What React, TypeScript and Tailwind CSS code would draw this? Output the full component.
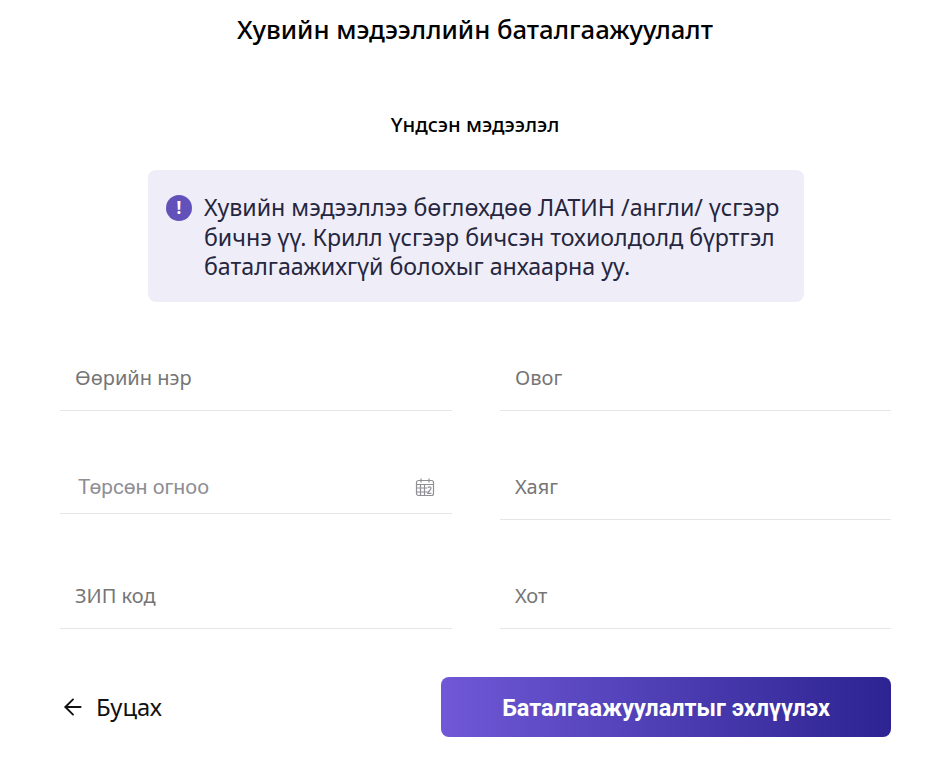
import { ArrowLeft } from 'lucide-react'

function Field({ label }: { label: string }) {
  return (
    <div className="h-[60px] flex items-center px-[15px] pb-[6px] border-b border-[#e6e6e6] font-['Noto_Sans',sans-serif] text-[20px] text-[#757575]">
      {label}
    </div>
  )
}

function CalendarIcon() {
  return (
    <svg width="20" height="20" viewBox="0 0 20 20" fill="none" stroke="#8f8f94" strokeWidth="1.2">
      <rect x="1.5" y="3.5" width="17" height="15" rx="2" />
      <path d="M1.5 7.5h17M6 1.5v4M14 1.5v4M1.5 11h11M1.5 15h11M5.5 8v10M9.5 8v10M13 10.5c1-1.2 3-.8 3 .8 0 1.5-3 3-3.2 5h3.6" />
    </svg>
  )
}

export default function App() {
  return (
    <div className="w-[946px] h-[760px] overflow-hidden bg-white pl-[60px] pr-[55px] font-['Noto_Sans',sans-serif]">
      <h1 className="h-[60px] flex items-center justify-center text-[25.7px] font-medium text-black pr-[1px]">
        Хувийн мэдээллийн баталгаажуулалт
      </h1>
      <h2 className="mt-[51px] h-[26px] flex items-center justify-center text-[20.3px] font-medium text-black pr-[1px]">
        Үндсэн мэдээлэл
      </h2>
      <div className="mt-[33px] ml-[88px] w-[656px] h-[132px] rounded-lg bg-[#efeef8] flex pl-[18px] pr-[16px] pt-[23px]">
        <div className="w-[26px] h-[26px] mt-[2px] shrink-0 rounded-full bg-[#6251b8] flex items-center justify-center text-white text-[17px] font-bold">
          !
        </div>
        <p className="ml-[12px] text-[23.2px] leading-[29.5px] text-[#26263f]">
          Хувийн мэдээллээ бөглөхдөө ЛАТИН /англи/ үсгээр бичнэ үү. Крилл үсгээр бичсэн тохиолдолд бүртгэл баталгаажихгүй болохыг анхаарна уу.
        </p>
      </div>

      <div className="mt-[49px] grid grid-cols-[392px_391px] gap-x-[48px]">
        <div>
          <Field label="Өөрийн нэр" />
          <div className="mt-[49px] h-[54px] flex items-center justify-between pl-[18px] pr-[17px] border-b border-[#e6e6e6] font-['Roboto',sans-serif] text-[20.8px] text-[#8e8e93]">
            <span className="mt-[2px]">Төрсөн огноо</span>
            <CalendarIcon />
          </div>
          <div className="mt-[55px]">
            <Field label="ЗИП код" />
          </div>
        </div>
        <div className="flex flex-col gap-[49px]">
          <Field label="Овог" />
          <Field label="Хаяг" />
          <Field label="Хот" />
        </div>
      </div>

      <div className="mt-[48px] flex items-center justify-between">
        <button className="flex items-center text-[23.8px] text-[#111]">
          <ArrowLeft size={26} strokeWidth={1.75} />
          <span className="ml-[10px] mt-[2px]">Буцах</span>
        </button>
        <button className="w-[450px] h-[60px] pt-[3px] rounded-lg bg-gradient-to-r from-[#7058d6] to-[#2e2392] text-white text-[23.5px] font-bold font-['Roboto',sans-serif]">
          Баталгаажуулалтыг эхлүүлэх
        </button>
      </div>
    </div>
  )
}
